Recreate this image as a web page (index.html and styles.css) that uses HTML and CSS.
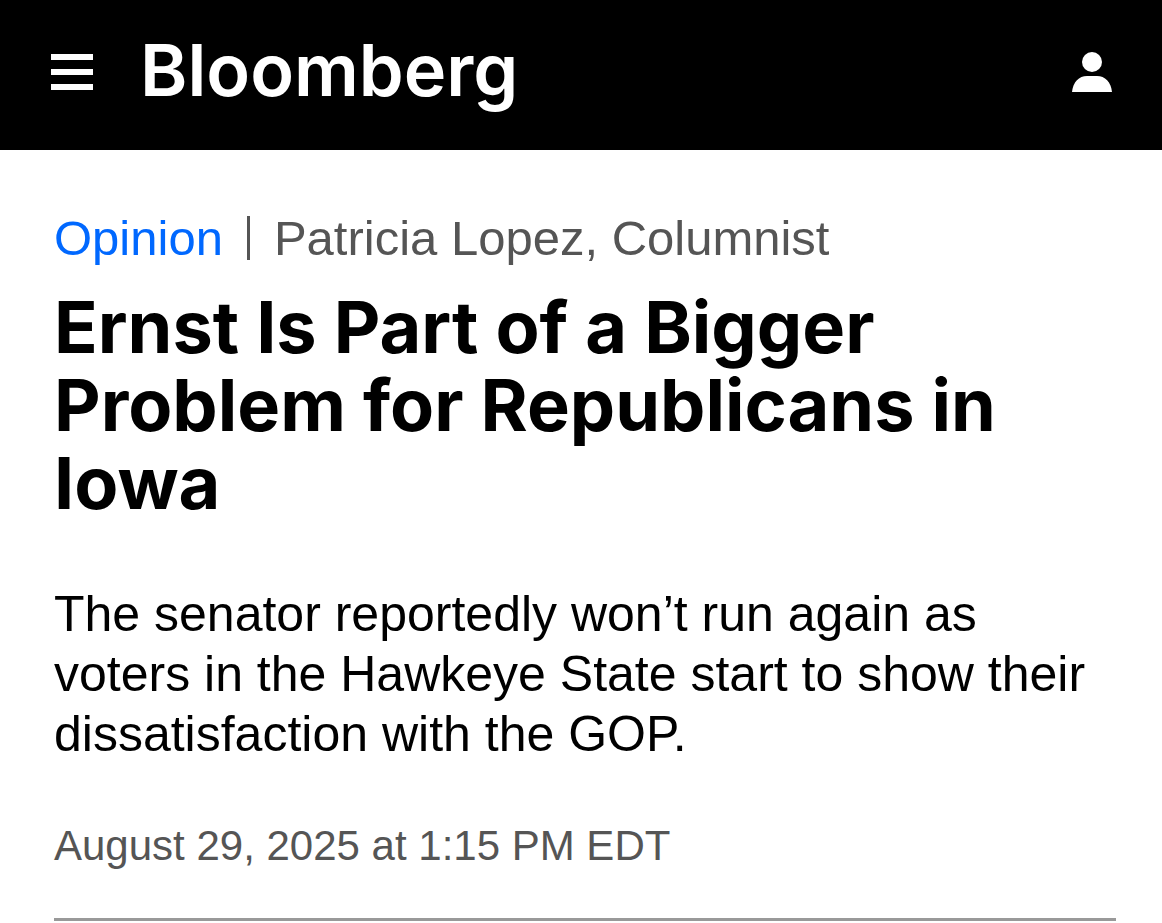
FILE: index.html
```html
<!DOCTYPE html>
<html lang="en">
<head>
<meta charset="utf-8">
<meta name="viewport" content="width=device-width, initial-scale=1">
<title>Ernst Is Part of a Bigger Problem for Republicans in Iowa</title>
<link rel="stylesheet" href="styles.css">
</head>
<body>
<header class="site-header">
  <button class="icon-button" type="button" aria-label="Menu">
    <svg class="menu-icon" viewBox="0 0 44 38" aria-hidden="true"><path d="M1 1h42v6H1zM1 16h42v6H1zM1 31h42v6H1z"/></svg>
  </button>
  <a class="brand" href="#">Bloomberg</a>
  <button class="icon-button account" type="button" aria-label="Account">
    <svg class="user-icon" viewBox="0 0 40 40" aria-hidden="true"><circle cx="20" cy="10" r="10"/><path d="M0 40C1 30 7 24 15 24h10c8 0 14 6 15 16z"/></svg>
  </button>
</header>
<main class="article">
  <p class="eyebrow"><a class="section-link" href="#">Opinion</a><span class="divider"></span><span>Patricia Lopez, Columnist</span></p>
  <h1 class="headline">Ernst Is Part of a Bigger Problem for Republicans in Iowa</h1>
  <p class="summary">The senator reportedly won’t run again as voters in the Hawkeye State start to show their dissatisfaction with the GOP.</p>
  <time class="published" datetime="2025-08-29T13:15-04:00">August 29, 2025 at 1:15 PM EDT</time>
  <hr class="rule">
</main>
</body>
</html>
```
FILE: styles.css
```css
* { box-sizing: border-box; }
body { margin: 0; background: #fff; color: #000; font-family: "Liberation Sans", Arial, sans-serif; }
.site-header { display: flex; align-items: center; padding: 24px 50px 30px; background: #000; color: #fff; }
.icon-button { display: flex; padding: 0; border: 0; background: none; color: inherit; cursor: pointer; }
.icon-button svg { display: block; fill: currentColor; }
.menu-icon { width: 44px; height: 38px; }
.user-icon { width: 40px; height: 40px; }
.account { margin-left: auto; }
.brand { margin-left: 46px; padding-bottom: 4px; color: inherit; font-family: Inter, sans-serif; font-size: 72px; font-weight: 600; line-height: 92px; text-decoration: none; }
.article { padding: 60px 46px 0 54px; }
.eyebrow { display: flex; align-items: center; margin: 0; color: #555; font-size: 49px; line-height: 56px; }
.section-link { color: #0068ff; text-decoration: none; }
.divider { width: 3px; height: 44px; margin: 0 24px; background: #555; }
.headline { margin: 22px 0 0; font-family: Inter, sans-serif; font-size: 72px; font-weight: 700; line-height: 78px; }
.summary { margin: 62px 0 0; font-size: 50px; line-height: 60px; }
.published { display: block; margin-top: 54px; color: #555; font-size: 42px; line-height: 56px; }
.rule { height: 3px; margin: 44px 0 0; border: 0; background: #999; }
```
